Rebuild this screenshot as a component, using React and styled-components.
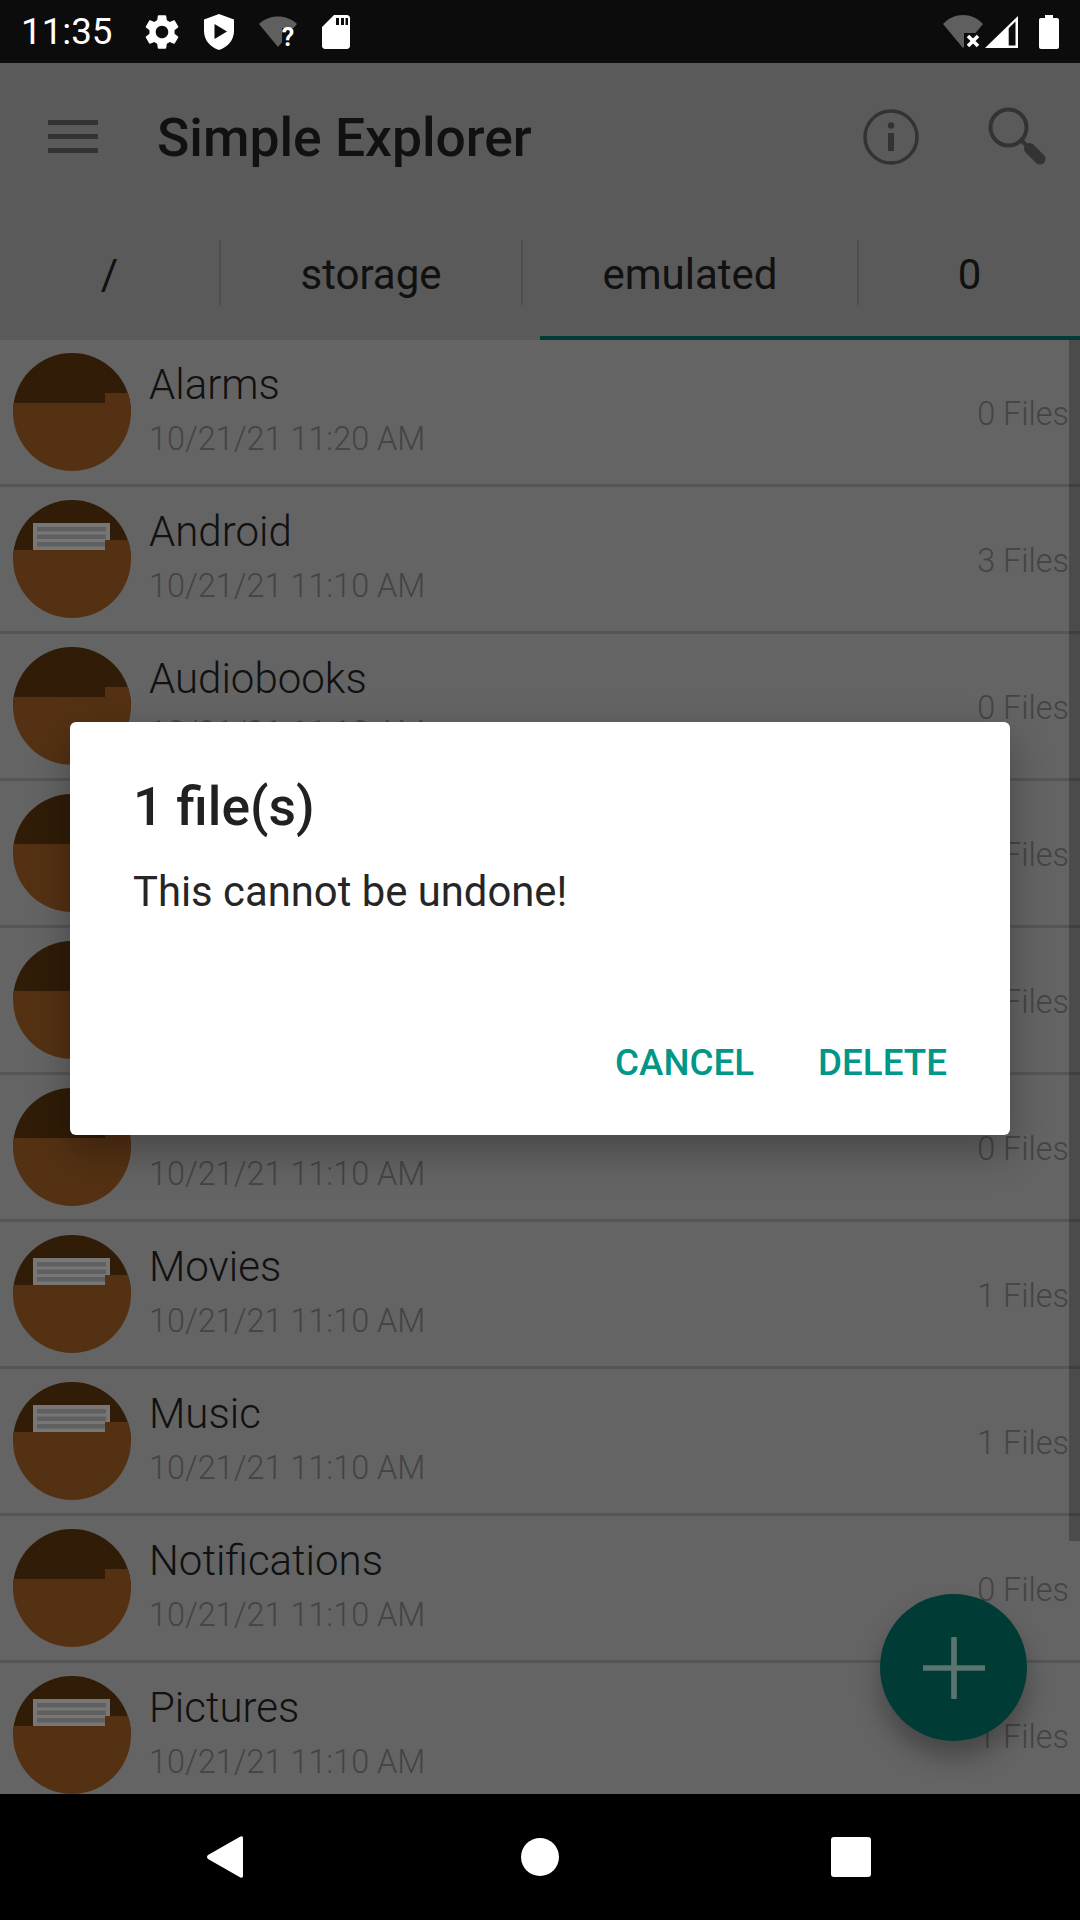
import React from 'react'
import styled, { createGlobalStyle } from 'styled-components'

const GlobalStyle = createGlobalStyle`
  html, body { margin: 0; padding: 0; background: #000; }
  body { font-family: Roboto, "Liberation Sans", sans-serif; }
`

const folders = [
  { name: 'Alarms', date: '10/21/21 11:20 AM', count: 0 },
  { name: 'Android', date: '10/21/21 11:10 AM', count: 3 },
  { name: 'Audiobooks', date: '10/21/21 11:10 AM', count: 0 },
  { name: 'DCIM', date: '10/21/21 11:10 AM', count: 0 },
  { name: 'Documents', date: '10/21/21 11:10 AM', count: 0 },
  { name: 'Download', date: '10/21/21 11:10 AM', count: 0 },
  { name: 'Movies', date: '10/21/21 11:10 AM', count: 1 },
  { name: 'Music', date: '10/21/21 11:10 AM', count: 1 },
  { name: 'Notifications', date: '10/21/21 11:10 AM', count: 0 },
  { name: 'Pictures', date: '10/21/21 11:10 AM', count: 1 },
]

const crumbs = [
  { label: '/', width: 221 },
  { label: 'storage', width: 302 },
  { label: 'emulated', width: 336 },
  { label: '0', width: 221 },
]

const gear = 'M19.14,12.94c0.04-0.3,0.06-0.61,0.06-0.94c0-0.32-0.02-0.64-0.07-0.94l2.03-1.58c0.18-0.14,0.23-0.41,0.12-0.61l-1.92-3.32c-0.12-0.22-0.37-0.29-0.59-0.22l-2.39,0.96c-0.5-0.38-1.03-0.7-1.62-0.94L14.4,2.81c-0.04-0.24-0.24-0.41-0.48-0.41h-3.84c-0.24,0-0.43,0.17-0.47,0.41L9.25,5.35C8.66,5.59,8.12,5.92,7.63,6.29L5.24,5.33c-0.22-0.08-0.47,0-0.59,0.22L2.74,8.87C2.62,9.08,2.66,9.34,2.86,9.48l2.03,1.58C4.84,11.36,4.8,11.69,4.8,12s0.02,0.64,0.07,0.94l-2.03,1.58c-0.18,0.14-0.23,0.41-0.12,0.61l1.92,3.32c0.12,0.22,0.37,0.29,0.59,0.22l2.39-0.96c0.5,0.38,1.03,0.7,1.62,0.94l0.36,2.54c0.05,0.24,0.24,0.41,0.48,0.41h3.84c0.24,0,0.44-0.17,0.47-0.41l0.36-2.54c0.59-0.24,1.13-0.56,1.62-0.94l2.39,0.96c0.22,0.08,0.47,0,0.59-0.22l1.92-3.32c0.12-0.22,0.07-0.47-0.12-0.61L19.14,12.94z M12,15.6c-1.98,0-3.6-1.62-3.6-3.6s1.62-3.6,3.6-3.6s3.6,1.62,3.6,3.6S13.98,15.6,12,15.6z'

function FolderIcon({ hasFiles }) {
  return (
    <Avatar viewBox="0 0 118 118">
      <rect width="118" height="60" fill="#60380f" />
      {hasFiles && (
        <g>
          <rect x="20" y="23" width="77" height="30" fill="#eeeeee" />
          <rect x="24" y="27" width="69" height="4.5" fill="#c0c0c0" />
          <rect x="24" y="34.5" width="69" height="4.5" fill="#c0c0c0" />
          <rect x="24" y="42" width="69" height="4.5" fill="#c0c0c0" />
        </g>
      )}
      <path d="M0 50H92V40H118V118H0Z" fill="#a86226" />
    </Avatar>
  )
}

function FolderRow({ name, date, count }) {
  return (
    <Row>
      <FolderIcon hasFiles={count > 0} />
      <RowText>
        <RowName>{name}</RowName>
        <RowDate>{date}</RowDate>
      </RowText>
      <RowCount>{count} Files</RowCount>
    </Row>
  )
}

export default function App() {
  return (
    <Screen>
      <GlobalStyle />
      <StatusBar>
        <Clock>11:35</Clock>
        <NotifIcons>
          <GearIcon viewBox="0 0 24 24"><path d={gear} /></GearIcon>
          <svg width="30" height="36" viewBox="0 0 30 36" fill="#fff">
            <path fillRule="evenodd" d="M15 0L30 5.5V17C30 26 24 33 15 36C6 33 0 26 0 17V5.5ZM10.5 10V25L23 17.5Z" />
          </svg>
          <svg width="38" height="32" viewBox="0 0 38 32" overflow="visible">
            <path d="M0 8C10 -2 28 -2 38 8L19 31Z" fill="#5f5f5f" />
            <path d="M23 12H38V32H23Z" fill="#0c0c0c" />
            <text x="29" y="30" fontSize="25" fontWeight="700" fontFamily="Roboto, sans-serif" fill="#fff" textAnchor="middle">?</text>
          </svg>
          <svg width="28" height="34" viewBox="0 0 28 34" fill="#fff">
            <path fillRule="evenodd" d="M12 0H25C26.6 0 28 1.4 28 3V31C28 32.6 26.6 34 25 34H3C1.4 34 0 32.6 0 31V12ZM14 3V10H17V3ZM19 3V10H22V3ZM23.5 3V10H26V3Z" />
          </svg>
        </NotifIcons>
        <SystemIcons>
          <svg width="40" height="33" viewBox="0 0 40 33">
            <path d="M0 9C11 -3 29 -3 40 9L20 33Z" fill="#5f5f5f" />
            <path d="M21 18H38V33H21Z" fill="#0c0c0c" />
            <path d="M25 21L35 31M35 21L25 31" stroke="#fff" strokeWidth="3.6" />
          </svg>
          <svg width="33" height="32" viewBox="0 0 33 32">
            <path fillRule="evenodd" d="M33 0V32H0ZM30.5 5.5L23.7 12.3V29.5H30.5Z" fill="#fff" />
          </svg>
          <svg width="20" height="34" viewBox="0 0 20 34" fill="#fff">
            <path d="M6 0H14V3H18C19.1 3 20 3.9 20 5V32C20 33.1 19.1 34 18 34H2C0.9 34 0 33.1 0 32V5C0 3.9 0.9 3 2 3H6Z" />
          </svg>
        </SystemIcons>
      </StatusBar>

      <Main>
        <Toolbar>
          <Hamburger><i /><i /><i /></Hamburger>
          <Title>Simple Explorer</Title>
          <ToolIcons>
            <svg width="56" height="56" viewBox="0 0 56 56" fill="none" stroke="#666">
              <circle cx="28" cy="28" r="26" strokeWidth="3.5" />
              <circle cx="28" cy="16.5" r="3.2" fill="#666" stroke="none" />
              <rect x="25" y="24" width="6" height="18" fill="#666" stroke="none" />
            </svg>
            <svg width="58" height="60" viewBox="0 0 58 60" fill="none" stroke="#666">
              <circle cx="20.5" cy="20.5" r="18" strokeWidth="4" />
              <path d="M33 33L39 39" strokeWidth="4" />
              <path d="M41.5 41.5L52 52" strokeWidth="11" strokeLinecap="round" />
            </svg>
          </ToolIcons>
        </Toolbar>

        <Breadcrumbs>
          {crumbs.map((crumb, index) => (
            <Crumb key={crumb.label} $width={crumb.width} $last={index === crumbs.length - 1}>
              {crumb.label}
            </Crumb>
          ))}
          <ActiveLine />
        </Breadcrumbs>

        <List>
          {folders.map(folder => (
            <FolderRow key={folder.name} {...folder} />
          ))}
          <ScrollThumb />
        </List>

        <Fab>
          <svg width="62" height="62" viewBox="0 0 62 62" fill="#b4e8e0">
            <path d="M28.2 0H33.8V28.2H62V33.8H33.8V62H28.2V33.8H0V28.2H28.2Z" />
          </svg>
        </Fab>

        <Scrim>
          <Dialog>
            <DialogTitle>1 file(s)</DialogTitle>
            <DialogMessage>This cannot be undone!</DialogMessage>
            <DialogActions>
              <DialogButton>CANCEL</DialogButton>
              <DialogButton>DELETE</DialogButton>
            </DialogActions>
          </Dialog>
        </Scrim>
      </Main>

      <NavBar>
        <svg width="36" height="42" viewBox="0 0 36 42" fill="#fff">
          <path d="M33 0.8C34.6 -0.3 36 0.4 36 2V40C36 41.6 34.6 42.3 33 41.2L1 23C-0.3 22 -0.3 20 1 19Z" />
        </svg>
        <HomeDot />
        <RecentSquare />
      </NavBar>
    </Screen>
  )
}

const Screen = styled.div`
  width: 1080px;
  height: 1920px;
  display: flex;
  flex-direction: column;
  overflow: hidden;
`

const StatusBar = styled.div`
  height: 63px;
  flex: none;
  background: #0c0c0c;
  display: flex;
  align-items: center;
  padding: 0 21px;
  color: #fff;
`

const Clock = styled.div`
  font-size: 36.75px;
  line-height: 63px;
  width: 120px;
`

const NotifIcons = styled.div`
  display: flex;
  align-items: center;
  gap: 25px;
`

const GearIcon = styled.svg`
  width: 42px;
  height: 42px;
  margin-right: -4px;
  fill: #fff;
`

const SystemIcons = styled.div`
  display: flex;
  align-items: center;
  gap: 2px;
  margin-left: auto;
  svg:last-child { margin-left: 19px; }
`

const Main = styled.div`
  position: relative;
  flex: 1;
  display: flex;
  flex-direction: column;
  background: #fff;
  overflow: hidden;
`

const Toolbar = styled.div`
  height: 147px;
  flex: none;
  background: #b4b4b4;
  display: flex;
  align-items: center;
  padding: 0 34px 0 48px;
`

const Hamburger = styled.div`
  width: 50px;
  display: flex;
  flex-direction: column;
  gap: 9px;
  i {
    display: block;
    height: 5px;
    background: #666;
  }
`

const Title = styled.div`
  margin-left: 59px;
  margin-top: 2px;
  font-size: 53.4px;
  font-weight: 500;
  color: #222;
`

const ToolIcons = styled.div`
  margin-left: auto;
  display: flex;
  align-items: center;
  gap: 69px;
`

const Breadcrumbs = styled.div`
  position: relative;
  height: 130px;
  flex: none;
  background: #b4b4b4;
  display: flex;
  padding-top: 30px;
  box-sizing: border-box;
`

const Crumb = styled.div`
  width: ${p => p.$width}px;
  height: 65px;
  box-sizing: border-box;
  border-right: ${p => (p.$last ? 'none' : '2px solid #9c9c9c')};
  display: flex;
  align-items: center;
  justify-content: center;
  padding-top: 4px;
  font-size: 42px;
  color: #222;
`

const ActiveLine = styled.div`
  position: absolute;
  left: 540px;
  right: 0;
  bottom: 0;
  height: 4px;
  background: #00796b;
`

const List = styled.div`
  position: relative;
  flex: 1;
  background: #c8c8c8;
  overflow: hidden;
`

const ScrollThumb = styled.div`
  position: absolute;
  top: 0;
  right: 0;
  width: 11px;
  height: 1201px;
  background: rgba(0, 0, 0, 0.25);
`

const Row = styled.div`
  height: 147px;
  box-sizing: border-box;
  border-bottom: 3px solid #aaa;
  display: flex;
  align-items: center;
  padding: 0 11px 0 13px;
`

const Avatar = styled.svg`
  width: 118px;
  height: 118px;
  flex: none;
  border-radius: 50%;
`

const RowText = styled.div`
  margin-left: 18px;
  flex: 1;
  margin-top: -6px;
`

const RowName = styled.div`
  font-size: 42px;
  font-weight: 300;
  line-height: 52px;
  color: #222;
`

const RowDate = styled.div`
  font-size: 32.4px;
  font-weight: 300;
  line-height: 40px;
  margin-top: 8px;
  color: #888;
`

const RowCount = styled.div`
  font-size: 32.4px;
  font-weight: 300;
  color: #888;
  margin-top: 3px;
`

const Fab = styled.div`
  position: absolute;
  right: 53px;
  bottom: 53px;
  width: 147px;
  height: 147px;
  border-radius: 50%;
  background: #00796b;
  display: flex;
  align-items: center;
  justify-content: center;
  box-shadow: 0 16px 26px rgba(0, 0, 0, 0.3);
`

const Scrim = styled.div`
  position: absolute;
  inset: 0;
  background: rgba(0, 0, 0, 0.5);
  display: flex;
  align-items: center;
  justify-content: center;
`

const Dialog = styled.div`
  width: 940px;
  height: 413px;
  box-sizing: border-box;
  padding: 0 63px;
  background: #fff;
  border-radius: 6px;
  display: flex;
  flex-direction: column;
  box-shadow: 0 16px 40px rgba(0, 0, 0, 0.3);
`

const DialogTitle = styled.div`
  margin-top: 54px;
  font-size: 53.4px;
  font-weight: 500;
  line-height: 62px;
  color: #212121;
`

const DialogMessage = styled.div`
  margin-top: 29px;
  font-size: 41.8px;
  line-height: 50px;
  color: #262626;
`

const DialogActions = styled.div`
  margin-top: auto;
  margin-bottom: 50px;
  display: flex;
  justify-content: flex-end;
  gap: 64px;
`

const DialogButton = styled.div`
  font-size: 36.75px;
  font-weight: 500;
  line-height: 44px;
  color: #009688;
`

const NavBar = styled.div`
  height: 126px;
  flex: none;
  background: #000;
  display: flex;
  align-items: center;
  padding: 0 209px 0 207px;
  justify-content: space-between;
`

const HomeDot = styled.div`
  width: 38px;
  height: 38px;
  margin-left: 6px;
  border-radius: 50%;
  background: #fff;
`

const RecentSquare = styled.div`
  width: 40px;
  height: 40px;
  border-radius: 3px;
  background: #fff;
`
